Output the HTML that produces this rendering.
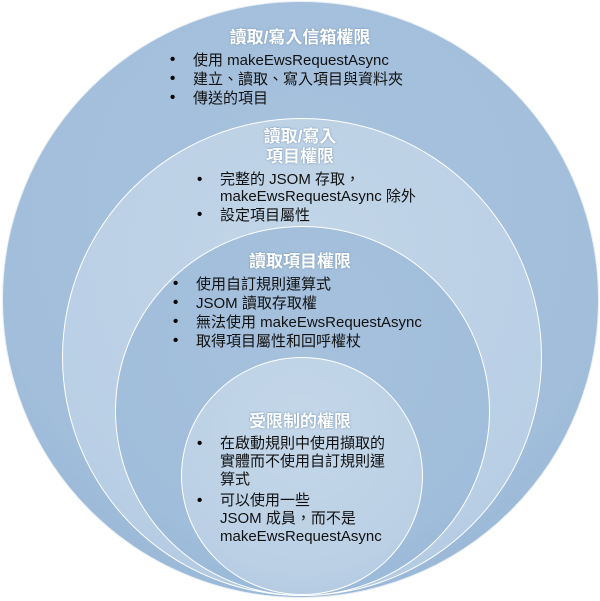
<!DOCTYPE html>
<html><head><meta charset="utf-8"><style>
body{margin:0;width:600px;height:601px;background:#fff;position:relative;overflow:hidden;font-family:"Liberation Sans","Noto Sans CJK TC",sans-serif;}
.c{position:absolute;border-radius:50%;box-sizing:border-box;border:1.5px solid #fff;}
.t{position:absolute;color:#fff;font-weight:bold;font-size:17px;text-align:center;text-shadow:0 0 2px #7f9cbc,0 0 1px #7f9cbc;line-height:20px}
.l{position:absolute;font-size:15px;color:#111;line-height:19px;white-space:nowrap}
.b{position:absolute;font-size:15px;color:#000;font-weight:bold}
</style></head><body>
<div class="c" style="left:2px;top:1px;width:597px;height:597px;background:radial-gradient(circle at 50% 35%,#a7c2dd 0%,#a2bedb 65%,#8fb0d3 100%);border-color:#e8eef5"></div>
<div class="c" style="left:62px;top:118px;width:480px;height:478px;background:radial-gradient(circle at 50% 30%,#c2d5e8 0%,#b9cfe5 70%,#a8c3de 100%)"></div>
<div class="c" style="left:115px;top:226px;width:375px;height:370px;background:radial-gradient(circle at 50% 30%,#a6c1dc 0%,#a0bddb 70%,#92b2d5 100%)"></div>
<div class="c" style="left:181px;top:357px;width:242px;height:238px;background:radial-gradient(circle at 50% 30%,#c4d7e9 0%,#bbd0e5 70%,#a9c4df 100%)"></div>

<div class="t" style="left:150px;width:300px;top:28px">讀取/寫入信箱權限</div>
<div class="b" style="left:170px;top:51px">•</div><div class="l" style="left:193px;top:51px">使用 makeEwsRequestAsync</div>
<div class="b" style="left:170px;top:70px">•</div><div class="l" style="left:193px;top:70px">建立、讀取、寫入項目與資料夾</div>
<div class="b" style="left:170px;top:89px">•</div><div class="l" style="left:193px;top:89px">傳送的項目</div>

<div class="t" style="left:200px;width:200px;top:127px">讀取/寫入<br>項目權限</div>
<div class="b" style="left:197px;top:171px">•</div><div class="l" style="left:220px;top:171px;line-height:17px">完整的 JSOM 存取，<br>makeEwsRequestAsync 除外</div>
<div class="b" style="left:197px;top:206px">•</div><div class="l" style="left:220px;top:206px">設定項目屬性</div>

<div class="t" style="left:200px;width:200px;top:252px">讀取項目權限</div>
<div class="b" style="left:173px;top:275px">•</div><div class="l" style="left:196px;top:275px">使用自訂規則運算式</div>
<div class="b" style="left:173px;top:294px">•</div><div class="l" style="left:196px;top:294px">JSOM 讀取存取權</div>
<div class="b" style="left:173px;top:313px">•</div><div class="l" style="left:196px;top:313px">無法使用 makeEwsRequestAsync</div>
<div class="b" style="left:173px;top:332px">•</div><div class="l" style="left:196px;top:332px">取得項目屬性和回呼權杖</div>

<div class="t" style="left:200px;width:200px;top:412px">受限制的權限</div>
<div class="b" style="left:197px;top:435px">•</div><div class="l" style="left:220px;top:435px;line-height:18px">在啟動規則中使用擷取的<br>實體而不使用自訂規則運<br>算式</div>
<div class="b" style="left:197px;top:492px">•</div><div class="l" style="left:220px;top:492px;line-height:18px">可以使用一些<br>JSOM 成員，而不是<br>makeEwsRequestAsync</div>
</body></html>
